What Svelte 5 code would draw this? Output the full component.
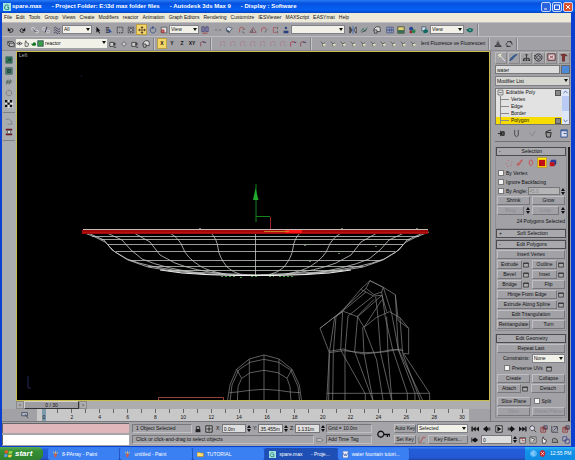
<script>
  // each icon is a list of [path, stroke, fill] on a 10x10 grid
  const icons = {
    undo: [['M3 8 Q8 8 7.5 5 Q6.5 2 3 4.5', '#111'], ['M1 2V6.5H5Z', 'none', '#111']],
    redo: [['M7 8 Q2 8 2.5 5 Q3.5 2 7 4.5', '#111'], ['M9 2V6.5H5Z', 'none', '#111']],
    link: [['M1 2H4V5H1Z M6 5.5H9V8.5H6Z', '#ddd', '#889'], ['M3 5L6 7', '#224']],
    unlink: [['M1 2H4V5H1Z M6 5.5H9V8.5H6Z', '#ddd', '#889'], ['M6 1L4 8', '#224']],
    bind: [['M1 3Q3 0 5 3T9 3 M1 6Q3 3 5 6T9 6 M1 9Q3 6 5 9T9 9', '#335']],
    cursor: [['M3 1V8L5 6.5L6.5 9.5L7.5 9L6 6H8Z', 'none', '#111']],
    list: [['M1 2H5 M1 4H5 M1 6H5 M1 8H5', '#223'], ['M5 3V9L7 7.5L9 8Z', 'none', '#2d4f9c']],
    rect: [['M1.5 1.5H8.5V8.5H1.5Z', '#222', 'none', '1.5 1']],
    windowSel: [['M1.5 1.5H8.5V8.5H1.5Z', '#222', 'none', '1.5 1'], ['M5 5m-2 0a2 2 0 1 0 4 0a2 2 0 1 0 -4 0', '#444', '#bbb']],
    move: [['M5 2V8 M2 5H8', '#543'], ['M5 0L7 2.5H3Z M5 10L3 7.5H7Z M0 5L2.5 3V7Z M10 5L7.5 7V3Z', 'none', '#543']],
    rotate: [['M4 1.8A3.5 3.5 0 1 0 7.5 2.7', '#33508c'], ['M4 0L7 2L4 4Z', 'none', '#33508c']],
    scale: [['M1.5 1.5H8.5V8.5H1.5Z', '#555', '#ddd'], ['M2 5H5V8H2Z', '#a22', '#c88']],
    pivot: [['M1 1H4V7H1Z M6 1H9V7H6Z', '#447', '#88a'], ['M2 9H8', '#a33']],
    manip: [['M1 5H4 M6 5H9', '#666']],
    cube: [['M1 4L4 1L9 3L6 7Z', '#456', '#dde'], ['M1 4L6 7V9L2 7Z', 'none', '#456']],
    snap: [['M2 8V4Q2 1.5 4.5 1.5T7 4', '#b34b56'], ['M6 4H9 M5 7L8 9', '#555']],
    angle: [['M1 8L5 2L9 8Z', '#84505a'], ['M4 8Q3 6 5 5', '#333']],
    percent: [['M2 7V4Q2 2 5 2T7 4', '#b34b56'], ['M6 8L9 4', '#555']],
    spin: [['M7 2H3V8H7', '#a85058'], ['M8 1V4 M8 6V9', '#555']],
    named: [['M5 1A1.5 1.5 0 1 1 4.9 1Z M2 9V6H8V9Z', 'none', '#27407e']],
    mirror: [['M1 1L4 5L1 9Z', '#333', '#555'], ['M9 1L6 5L9 9Z', '#333', '#bbb'], ['M5 0V10', '#36c']],
    align: [['M1 7L4 3L6 7L9 2', '#2e6857'], ['M2 8L8 5', '#444']],
    layers: [['M1 4L4 1H8L9 3V7H4Z', '#333', '#ddd'], ['M1 5H5V9H2Z', '#333', '#bbb']],
    table: [['M1 1.5H9V8.5H1Z M1 4H9 M1 6H9 M4 2V8 M6.5 2V8', '#347', '#dde']],
    schematic: [['M1 1H9V9H1Z', '#444', '#e0d570'], ['M1 5H9V9H1Z', 'none', '#3e6f55']],
    material: [['M4 1A2.5 2.5 0 1 1 3.9 1Z', 'none', '#293f94'], ['M7 4A2.5 2.5 0 1 1 6.9 4Z', 'none', '#298050'], ['M2 6H5V9H2Z', 'none', '#a32929']],
    render: [['M1 1H6V6H1Z', '#456', '#cde'], ['M3 6Q3 4 6 4T9 7Q8 9 5 9T3 6Z', 'none', '#126b62']],
    teapot: [['M2 4Q5 1 8 4L9.5 3L8 7Q5 9 2 7L0 4Z', 'none', '#126b62'], ['M4 5H6', '#dfe']],
    layer: [['M1 2H7L9 4V8H3L1 6Z', '#333', '#bbb'], ['M1 2L3 4H9 M3 4V8', '#333']],
    eye: [['M1 5Q5 1 9 5Q5 9 1 5Z', '#333', '#fff'], ['M4 4H6V6H4Z', 'none', '#223']],
    hand: [['M3 9V4L4 1L5 4L8 5L7 9Z', '#333', '#eee']],
    pot: [['M1 4L3 6Q5 2 8 4L9 7Q6 9 3 8Z', 'none', '#147326']],
    green: [['M1 1H9V9H1Z', '#245', '#3c9d48']],
    addLayer: [['M1 3H6V8H1Z', '#333', '#ccc'], ['M5 5H9 M7 3V7 M6 9H9', '#333']],
    diamond: [['M2 5L5 2L8 5L5 8Z', '#555', '#ccc']],
    faded: [['M2 8V4Q2 2 5 2T8 4', '#aa7f86'], ['M6 5L8 8', '#86868c']],
    snapAxis: [['M2 8V4Q2 2 5 2T8 4', '#824754'], ['M5 3H9', '#447']],
    magnet: [['M2 8V4Q2 2 5 2T8 4', '#ad3948'], ['M6 3H9', '#447']],
    bulb: [['M2 2L5 5L5 8 M5 5L7 3', '#555'], ['M5 5H8V7H5Z', 'none', '#ece8ba']],
    stand: [['M5 1V6 M3 4H7', '#333'], ['M1 8L3 6H7L9 8Z', '#222', '#777']],
    recycle: [['M3 2L7 2 M8 3L9 6 M7 8H3 M1 6L3 3', '#222'], ['M7 1L9 3H6Z M3 9L1 7H4Z', 'none', '#222']],
    reactor1: [['M1 1H9V9H1Z', '#466', '#2f7556'], ['M3 7L7 3M4 4H7V7', '#143f30']],
    reactor2: [['M1 1H9V9H1Z', '#355', '#5c9274'], ['M3 3H7V7H3Z', '#234', '#2a634b']],
    hash: [['M2 8L4 2 M5 8L7 2 M1 4H9 M1 6H8', '#4d5f55']],
    ring: [['M5 1.5A3.5 3.5 0 1 1 4.9 1.5Z', '#777', '#aaa']],
    checker: [['M0 0H10V10H0Z', 'none', '#ddd'], ['M0 0H3V3H0Z M6 0H9V3H6Z M3 3H6V6H3Z M0 6H3V9H0Z M6 6H9V9H6Z', 'none', '#111']],
    cloth: [['M1 3Q5 1 8 5L9 9H3', '#7c7c80']],
    film: [['M1 1H9V3H1Z M1 7H9V9H1Z', 'none', '#6c1820'], ['M3 3H7V7H3Z', '#555', '#ddd']],
    create: [['M2 1L9 9', '#eee'], ['M1 3L5 1 M2 5L4 3', '#ffc']],
    modify: [['M1 9Q1 5 5 4T9 1', '#223a67'], ['M1 9Q4 8 6 5L9 1Q4 1 1 9Z', 'none', '#345c94']],
    hierarchy: [['M5 3V6 M2 7V6H8V7', '#333'], ['M4 1H6V3H4Z M1 7H3V9H1Z M4 7H6V9H4Z M7 7H9V9H7Z', 'none', '#333']],
    motion: [['M5 1A4 4 0 1 1 4.9 1Z M5 3A2 2 0 1 1 4.9 3Z', '#333'], ['M0 3H2 M0 6H1', '#333']],
    display: [['M1 1H9V8H1Z', '#5a1a26', '#ddd'], ['M3 3L7 6 M7 3L3 6', '#9d3946']],
    hammer: [['M2 2Q6 0 9 3L6 3V9H4V3Z', '#6a2929', '#8b3535']],
    pin: [['M1 5H4 M4 2V8 M5 3H8V7H5Z', '#222', '#555']],
    tube: [['M3 1V7Q5 10 7 7V1', '#444']],
    check: [['M2 4L5 8L8 2', '#888']],
    trash: [['M2 4H8L7 9H3Z', '#222', '#999'], ['M2 3L8 1', '#222']],
    config: [['M1 1H8V9H1Z', '#234b91', '#dde'], ['M1 2H8 M4 5H7', '#234b91']],
    trackview: [['M1 2H8V6H1Z M5 4L9 9', '#345', '#bbc']],
    vertex: [['M1 6H2 M4 2H5 M8 4H9 M3 9H4 M7 8H8', '#ce4545']],
    edge: [['M1 7L5 6L8 1L5 3Z M2 9L5 6', '#ce4545']],
    border: [['M4 1Q8 1 7 6Q5 10 3 7Q2 4 4 1', '#ce4545']],
    polygon: [['M1 1H9V9H1Z', 'none', '#c00f16']],
    element: [['M1 4L3 1H9L7 4Z', 'none', '#2d3b9c'], ['M1 4H7V9H1Z', 'none', '#c00f16'], ['M7 4L9 1V6L7 9Z', 'none', '#232d6c']],
    box: [['M1 1.5H9V8.5H1Z', '#111', '#aaa'], ['M1 2.5H9', '#111']],
    lock: [['M3 5V2H7V5', '#222'], ['M2 5H8V9H2Z', 'none', '#222']],
    absolute: [['M1 1H9V9H1Z', '#111', '#bbb'], ['M5 2V8 M2 5H8', '#111']],
    tag: [['M1 3H6L9 5L6 7H1Z', '#777', '#bbb']],
    key: [['M3 2.5A2.3 2.3 0 1 1 2.9 2.5Z M5 5H10 M8 5V7 M10 5V7', '#111']],
    curve: [['M1 8Q4 8 5 4T9 2', '#b33'], ['M1 1V9H9', '#777']],
    first: [['M1 2V8 M2 2V8', '#111'], ['M6 2V8L2 5Z M10 2V8L6 5Z', 'none', '#111']],
    prev: [['M5 1V9L0 5Z M5 3H7V7H5Z M8 3H9V7H8Z', 'none', '#111']],
    play: [['M1 1H9V9H1Z', '#111', '#ccc'], ['M3 2L8 5L3 8Z', 'none', '#111']],
    next: [['M5 1V9L10 5Z M3 3H5V7H3Z M1 3H2V7H1Z', 'none', '#111']],
    last: [['M8 2V8 M9 2V8', '#111'], ['M0 2V8L4 5Z M4 2V8L8 5Z', 'none', '#111']],
    keyMode: [['M1 2V8', '#111'], ['M5 2V8L1 5Z M5 2V8L9 5Z', 'none', '#111']],
    clock: [['M1 2H8V9H1Z', '#444', '#ddd'], ['M4 4V6H7 M1 3H8', '#933']],
    zoom: [['M4 1A3 3 0 1 1 3.9 1Z', '#333', '#dde'], ['M6 6L9 9', '#333']],
    zoomAll: [['M1 3H7V9H1Z M4 1V8 M2 5H9', '#933'], ['M5 1H9V5H5Z', '#335']],
    extents: [['M1 1V9 M1 9H9 M3 2H8V7', '#334'], ['M3 7L7 3', '#447']],
    fov: [['M1 1H9V9H1Z', '#555', '#bbb'], ['M2 2L7 4L5 7', '#333', '#eee']],
    arc: [['M2 7Q1 2 5 3T8 8 M1 8H9', '#333', '#999']],
    maxmin: [['M1 1H6V6H1Z M4 4H9V9H4Z', '#343a83', '#bbb']],
    paint: [['M3 4H7L6 9H4Z', 'none', '#db5937'], ['M3 4L2 1 M5 4V0 M7 4L8 1', '#f7cf58']],
    folder: [['M0 2H4L5 3H9V8H0Z', '#b98a23', '#ffe273']],
    max: [['M0 0H10V10H0Z', 'none', '#a6e3db'], ['M7 3Q3 1 2 5T7 8V5H5', '#08736f']],
    word: [['M1 0H9V10H1Z', '#345da9', '#eef'], ['M2 3L4 7L5 4L6 7L8 3', '#345da9']],
    shield: [['M5 0Q9 1 9 5T5 10Q1 9 1 5T5 0Z', 'none', '#c52a32'], ['M3 3L7 7M7 3L3 7', '#fff']],
    arrowLeft: [['M5 0A5 5 0 1 1 4.9 0Z', 'none', '#58b5f6'], ['M6 2L3 5L6 8', '#fff']],
    chevron: [['M2 6L5 3L8 6', '#346']]
  };

  const menus = ['File', 'Edit', 'Tools', 'Group', 'Views', 'Create', 'Modifiers', 'reactor', 'Animation',
    'Graph Editors', 'Rendering', 'Customize', 'IESViewer', 'MAXScript', 'EASYmat', 'Help'];

  const mainBar = ['undo', 'redo', '|', 'link', 'unlink', 'bind', 'select:All:30', 'cursor', 'list', 'rect', 'windowSel',
    'move', 'rotate', 'scale', 'select:View:30', 'pivot', '|', 'manip', 'cube', '|', 'snap', 'angle', 'percent', 'spin',
    'named', 'select::54', '|', 'mirror', 'align', '|', 'layers', '|', 'table', 'schematic', 'material', '|', 'render',
    'select:View:34', 'teapot'];

  const stack = ['Vertex', 'Edge', 'Border', 'Polygon'];
  const frames = Array.from({ length: 31 }, (_, i) => i);
  const tasks = [
    { icon: 'paint', text: '8-PArray - Paint' },
    { icon: 'paint', text: 'untitled - Paint' },
    { icon: 'folder', text: 'TUTORIAL' },
    { icon: 'max', text: 'spare.max      - Proje...', active: true },
    { icon: 'word', text: 'water fountain tutori...' }
  ];

  const rings = [
    [92, 237], [101, 240], [108, 245], [116, 252], [130, 261], [148, 267], [168, 271]
  ];
  const ribs = [
    'M82 232L95 237L105 242L115 252L128 260L148 267L172 271L205 274L256 275',
    'M88 233L104 240L112 250L127 259Q150 268 190 272L256 275',
    'M107 233L122 240L131 250L142 259Q165 269 205 274',
    'M134 233L150 242L160 255L175 263Q195 271 225 274',
    'M170 233Q180 239 183 248T200 266Q208 271 225 274',
    'M211 233Q217 239 218 248T227 267Q232 272 242 275'
  ];
</script>

{#snippet icon(name)}
  <svg class="icon" viewBox="0 0 10 10" aria-hidden="true">
    {#each icons[name] as [d, stroke, fill, dash]}
      <path {d} {stroke} fill={fill ?? 'none'} stroke-dasharray={dash} />
    {/each}
  </svg>
{/snippet}

{#snippet tool(name, on = false)}
  <button class="tool" class:on aria-label={name}>{@render icon(name)}</button>
{/snippet}

{#snippet combo(value, label)}
  <span class="combo">
    <select aria-label={label}><option>{value}</option></select>
  </span>
{/snippet}

{#snippet header(sign, text)}
  <button class="header"><span>{sign}</span><b>{text}</b></button>
{/snippet}

{#snippet spinner()}
  <span class="spinner"><i></i><i></i></span>
{/snippet}

<div class="window">
  <header class="titlebar">
    {@render icon('max')}
    <span class="file">spare.max</span>
    <span class="project">- Project Folder: E:\3d max folder files</span>
    <span class="product">- Autodesk 3ds Max 9</span>
    <span>- Display : Software</span>
    <div class="winbuttons">
      <button aria-label="Minimize"><svg viewBox="0 0 8 8"><path d="M2 6H5" /></svg></button>
      <button aria-label="Restore"><svg viewBox="0 0 8 8"><path d="M1.5 2H6.5V6.5H1.5Z" /></svg></button>
      <button class="close" aria-label="Close"><svg viewBox="0 0 8 8"><path d="M2 2L6 6M6 2L2 6" /></svg></button>
    </div>
  </header>

  <nav class="menu">
    {#each menus as item}
      <button>{item}</button>
    {/each}
  </nav>

  <div class="toolbar">
    {#each mainBar as item}
      {#if item === '|'}
        <i class="sep"></i>
      {:else if item.startsWith('select')}
        <div class="sized" style="width: {item.split(':')[2]}px">{@render combo(item.split(':')[1], 'Options')}</div>
      {:else}
        {@render tool(item, item === 'move')}
      {/if}
    {/each}
    <i class="end"></i>
  </div>

  <div class="toolbar">
    {@render tool('layer')}
    <div class="layers">
      {@render icon('eye')}{@render icon('hand')}{@render icon('pot')}{@render icon('green')}
      {@render combo('reactor', 'Layer')}
    </div>
    {@render tool('addLayer')}{@render tool('diamond')}{@render tool('addLayer')}{@render tool('layers')}
    <i class="end"></i>
    <button class="axis on">X</button>
    <button class="axis">Y</button>
    <button class="axis">Z</button>
    <button class="axis">XY</button>
    {@render tool('snapAxis')}
    <i class="end"></i>
    <div class="strip">
      {#each Array(7) as _}{@render tool('faded')}{/each}
      {@render tool('magnet')}{@render tool('snapAxis')}
    </div>
    <i class="end"></i>
    <div class="strip">
      {#each Array(10) as _}{@render tool('bulb')}{/each}
    </div>
    <span class="lights">lent Fluoresce ve Fluorescen</span>
    <i class="end"></i>
    {@render tool('stand')}{@render tool('recycle')}
    <i class="end"></i>
  </div>

  <div class="body">
    <div class="left">
      <aside class="reactor">
        {@render tool('reactor1')}{@render tool('reactor2')}{@render tool('hash')}{@render tool('ring')}{@render tool('checker')}
        <hr />
        {@render tool('cloth')}{@render tool('film')}
        <hr />
      </aside>
      <div class="stage">
        <main class="viewport">
          <svg viewBox="17 51 472 350" preserveAspectRatio="xMidYMid slice" role="img" aria-label="Left viewport">
            <text x="19" y="57">Left</text>
            <path class="dim" d="M81 76H82M28 376V388H31" />

            {#each rings as [x, y]}
              <path class="ring" d="M{x} {y - 0.5}H{511 - x}" />
            {/each}
            <g class="rib">
              {#each ribs as d}<path {d} />{/each}
            </g>
            <g class="rib" transform="translate(511 0) scale(-1 1)">
              {#each ribs as d}<path {d} />{/each}
            </g>
            <path class="rib" d="M255.500 233V276" />
            <path class="keel" d="M160 270L182 273L205 274.500L235 275.500H276L306 274.500L329 273L351 270" />
            <path d="M82 230H428V234H82Z" fill="#a00808" />
            <path d="M83 229.500H428" stroke="#c9baba" />
            <path d="M82 232.500H428" stroke="#b51212" />
            <path d="M285 231.500H302" stroke="#ff1717" stroke-width="3" />
            <path d="M264 231.500H289" stroke="#c67b25" />
            <path d="M221 276.500H236M240 277.500H243M251 276.500H258M269 276.500H274M279 276.500H293" stroke="#3b9a3b" stroke-dasharray="2 2" />
            <path d="M199 228.500H201M341 228.500H343M416 228.500H418M304 245.500H306M338 253.500H340M375 246.500H377M309 261.500H311" stroke="#617861" />
            <path d="M256 184V222M256 216.500H270" stroke="#15851b" fill="none" />
            <path d="M270.500 217V229" stroke="#a12222" />
            <path d="M255.500 188L258.500 200H253Z" fill="#22a82a" />

            <!-- dome -->
            <g class="mesh" transform="translate(210 270) scale(.3333)">
              <path d="M52 395L60 345L80 298L118 267L162 255L207 267L246 298L268 345L275 395" />
              <path d="M60 395L66 345L86 300L120 277L162 268L206 277L242 300L264 350L269 395" />
              <path d="M82 395L84 350L95 325L121 308L162 301L204 308L231 325L240 350L243 395" />
              <path d="M58 368L82 366L120 361L162 358L204 361L240 366L270 368" />
              <path d="M118 267V395M162 255V395M207 267V395M80 298L95 325M246 298L231 325" />
            </g>

            <!-- rock -->
            <g class="mesh" transform="translate(210 270) scale(.3333)">
              <path d="M480 32L520 52L556 74L565 152L596 175V252L580 250L659 370V395M480 32L452 58L398 122L330 175L358 248L350 395" />
              <path d="M480 32L468 55L492 74L515 66L520 52L480 32M452 58L468 66L490 78L516 76L530 125" />
              <path d="M330 175L372 142L400 124L443 140L462 172L500 142L538 125L570 143L596 175" />
              <path d="M358 244L400 237L430 246L462 252L500 248L550 238L580 242M358 248L400 242L462 248L520 246L575 237" />
              <path d="M350 370H659" />
              <path d="M468 55L374 142L358 248L356 395M468 66L378 140L370 248L368 395" />
              <path d="M490 78L414 138L405 248V395M492 88L443 138L434 244L490 395M398 122L392 240L466 372V395" />
              <path d="M516 76L443 140M515 90L462 172L500 270L520 395M458 172L462 250L490 395" />
              <path d="M497 80L504 142L512 250L546 395M515 66L526 142L548 238L592 370V395" />
              <path d="M520 52L545 130L565 238L640 395M556 74L565 240L615 370V395M530 140L534 250L546 395M570 143L578 250L632 395" />
            </g>
            <path d="M158.500 401V397.500H223.500V401" stroke="#993e35" fill="none" />
          </svg>
        </main>
        <div class="slider">
          <button>&lt;</button><button class="thumb">0 / 30</button><button>&gt;</button>
        </div>
      </div>
      <div class="trackbar">
        <div class="trackicon">{@render icon('trackview')}</div>
        <div class="ticks">
          {#each frames as f}
            <div class="tick" class:now={f === 0}>{f % 2 === 0 ? f : ''}</div>
          {/each}
        </div>
      </div>
    </div>

    <aside class="command">
      <div class="tabs">
        {@render tool('create')}{@render tool('modify')}{@render tool('hierarchy')}{@render tool('motion')}{@render tool('display')}{@render tool('hammer')}
      </div>
      <div class="name"><input value="water" aria-label="Object name" /><button class="swatch" aria-label="Object color"></button></div>
      {@render combo('Modifier List', 'Modifier List')}
      <div class="stack">
        <ul>
          <li><svg class="icon" viewBox="0 0 10 10"><path d="M1.500 1.500H8.500V8.500H1.500ZM3 5H7" stroke="#555" fill="none" /></svg>Editable Poly<i></i></li>
          {#each stack as level}
            <li class="sub" class:picked={level === 'Polygon'}>{level}{#if level === 'Polygon'}<i></i>{/if}</li>
          {/each}
        </ul>
        <div class="scroll"><button aria-label="Up">{@render icon('chevron')}</button><span></span><button class="down" aria-label="Down">{@render icon('chevron')}</button></div>
      </div>
      <div class="tabs small">
        {@render tool('pin')}{@render tool('tube')}{@render tool('check')}{@render tool('trash')}{@render tool('config')}
      </div>

      <div class="rollouts">
        <section>
          {@render header('-', 'Selection')}
          <div class="levels">
            {@render tool('vertex')}{@render tool('edge')}{@render tool('border')}{@render tool('polygon', true)}{@render tool('element')}
          </div>
          <label><input type="checkbox" />By Vertex</label>
          <label><input type="checkbox" />Ignore Backfacing</label>
          <div class="angle">
            <label><input type="checkbox" />By Angle:</label>
            <input class="num" value="45.0" disabled aria-label="Angle" />{@render spinner()}
          </div>
          <div class="pair"><button>Shrink</button><button>Grow</button></div>
          <div class="pair off"><button disabled>Ring</button>{@render spinner()}<button disabled>Loop</button>{@render spinner()}</div>
          <p>24 Polygons Selected</p>
        </section>
        <section>{@render header('+', 'Soft Selection')}</section>
        <section>
          {@render header('-', 'Edit Polygons')}
          <div class="pair"><button>Insert Vertex</button></div>
          {#each [['Extrude', 'Outline'], ['Bevel', 'Inset'], ['Bridge', 'Flip']] as row}
            <div class="pair">
              {#each row as text}
                <div class="cell"><button>{text}</button>{#if text !== 'Flip'}{@render tool('box')}{/if}</div>
              {/each}
            </div>
          {/each}
          {#each ['Hinge From Edge', 'Extrude Along Spline'] as text}
            <div class="pair"><div class="cell"><button>{text}</button>{@render tool('box')}</div></div>
          {/each}
          <div class="pair"><button>Edit Triangulation</button></div>
          <div class="pair"><button>Retriangulate</button><button>Turn</button></div>
        </section>
        <section class="geometry">
          {@render header('-', 'Edit Geometry')}
          <div class="pair"><button>Repeat Last</button></div>
          <div class="constraints"><span>Constraints:</span>{@render combo('None', 'Constraints')}</div>
          <div class="preserve"><label><input type="checkbox" />Preserve UVs</label>{@render tool('box')}</div>
          <div class="pair"><button>Create</button><button>Collapse</button></div>
          <div class="pair"><div class="cell"><button>Attach</button>{@render tool('box')}</div><button>Detach</button></div>
          <div class="pair slice"><button>Slice Plane</button><label><input type="checkbox" />Split</label></div>
          <div class="pair off"><button disabled>Slice</button><button disabled>Reset Plane</button></div>
        </section>
      </div>
    </aside>
  </div>

  <footer class="status">
    <div class="listener"><div></div><div></div></div>
    <div class="info">
      <div class="line">
        <span class="sunk selected">1 Object Selected</span>
        {@render tool('lock')}{@render tool('absolute')}
        {#each [['X:', '0.0m'], ['Y:', '35.455m'], ['Z:', '1.131m']] as [axis, value]}
          <label class="coord">{axis}<input {value} /></label>{@render spinner()}
        {/each}
        <span class="sunk grid">Grid = 10.0m</span>
      </div>
      <div class="line">
        <span class="sunk prompt">Click or click-and-drag to select objects</span>
        {@render tool('tag')}
        <span class="sunk grid">Add Time Tag</span>
      </div>
    </div>
    <button class="setkeys" aria-label="Set keys">{@render icon('key')}</button>
    <div class="keys">
      <div class="line"><button class="flat">Auto Key</button>{@render combo('Selected', 'Key set')}</div>
      <div class="line"><button class="flat">Set Key</button>{@render tool('curve')}<button class="flat filters">Key Filters...</button></div>
    </div>
    <div class="playback">
      <div class="line">{@render tool('first')}{@render tool('prev')}{@render tool('play')}{@render tool('next')}{@render tool('last')}</div>
      <div class="line">{@render tool('keyMode')}<input value="0" aria-label="Frame" />{@render spinner()}{@render tool('clock')}</div>
    </div>
    <div class="navtools">
      <div class="line">{@render tool('zoom')}{@render tool('zoomAll')}{@render tool('extents')}{@render tool('zoomAll')}</div>
      <div class="line">{@render tool('fov')}{@render tool('hand')}{@render tool('arc')}{@render tool('maxmin')}</div>
    </div>
  </footer>
</div>

<div class="taskbar">
  <button class="start">
    <svg viewBox="0 0 10 10" aria-hidden="true">
      <path d="M1 2Q3 1 4.500 2L4 5Q2 4 .5 5Z" fill="#f0532d" />
      <path d="M5.500 2Q7 3 9.500 2L9 5Q7 6 5 5Z" fill="#8ed44b" />
      <path d="M.5 6Q2 5 4 6L3.500 9Q2 8 0 9Z" fill="#5b9cf5" />
      <path d="M5 6Q7 7 9 6L8 9Q6 10 4.500 9Z" fill="#fbd13c" />
    </svg>start
  </button>
  <div class="tasks">
    {#each tasks as task}
      <button class:active={task.active}>{@render icon(task.icon)}<span>{task.text}</span></button>
    {/each}
  </div>
  <div class="tray">{@render icon('arrowLeft')}{@render icon('shield')}<span>12:55 PM</span></div>
</div>

<style>
  :global(body) {
    margin: 0;
  }

  :global(#app) {
    height: 100vh;
    display: flex;
    flex-direction: column;
    overflow: hidden;
    background: #a1a1a6;
    font: 5px/7px "Liberation Sans", Arial, sans-serif;
    color: #111;
  }

  button, input, select {
    box-sizing: border-box;
    min-width: 0;
    margin: 0;
    padding: 0;
    border: 0;
    border-radius: 0;
    font: inherit;
    color: inherit;
    background: none;
  }

  .icon {
    width: 8px;
    height: 8px;
    flex: none;
    display: block;
  }

  .window {
    flex: 1;
    min-height: 0;
    display: flex;
    flex-direction: column;
    border: solid #0b3fd0;
    border-width: 0 4px 1px 2px;
  }

  .titlebar {
    height: 13px;
    flex: none;
    display: flex;
    align-items: center;
    margin: 0 -4px 0 -2px;
    padding: 0 2px 0 3px;
    background: linear-gradient(#2a7cf5, #0652df 25%, #0560f4 75%, #0446c4);
    color: #fff;
    font-size: 6px;
    font-weight: bold;
    white-space: pre;
  }

  .file {
    margin: 0 10px 0 1px;
  }

  .project, .product {
    margin-right: 10px;
  }

  .winbuttons {
    display: flex;
    gap: 1px;
    margin-left: auto;
  }

  .winbuttons button {
    width: 10px;
    height: 10px;
    border: 1px solid #c6d8fa;
    border-radius: 2px;
    background: #2a63dc;
  }

  .winbuttons .close {
    background: #dc4e2c;
  }

  .winbuttons svg {
    display: block;
    fill: none;
    stroke: #fff;
  }

  .menu {
    height: 9px;
    flex: none;
    display: flex;
    gap: 4px;
    padding-left: 2px;
    background: #ece9d8;
  }

  .menu button {
    white-space: nowrap;
  }

  .toolbar {
    height: 14px;
    flex: none;
    box-sizing: border-box;
    display: flex;
    align-items: center;
    padding-left: 3px;
    border-top: 1px solid #bdbdc2;
  }

  .tool {
    width: 10px;
    height: 11px;
    flex: none;
    display: flex;
    align-items: center;
    justify-content: center;
  }

  .toolbar .tool {
    width: 11px;
  }

  .toolbar .strip .tool {
    width: 10px;
  }

  .on {
    background: #f3d568;
    box-shadow: inset 0 0 0 1px #b99e45;
  }

  .sep {
    width: 2px;
    flex: none;
  }

  .end {
    width: 1px;
    height: 12px;
    flex: none;
    margin: 0 2px;
    background: #808087;
    border-right: 1px solid #c5c5ca;
  }

  .sized {
    display: flex;
    flex: none;
  }

  .combo {
    flex: 1;
    min-width: 0;
    position: relative;
    display: flex;
    height: 9px;
    background: #f2f1e8;
    border: 1px solid #80808a;
    box-sizing: border-box;
  }

  .combo::after {
    content: "";
    position: absolute;
    right: 1px;
    top: 2px;
    border: 2px solid transparent;
    border-top: 3px solid #111;
    pointer-events: none;
  }

  .combo select {
    appearance: none;
    width: 100%;
    line-height: 7px;
    padding-left: 1px;
  }

  .layers {
    width: 91px;
    height: 9px;
    display: flex;
    align-items: center;
    background: #f2f1e8;
  }

  .layers .icon {
    width: 7px;
    height: 7px;
  }

  .layers .combo {
    border: 0;
  }

  .axis {
    width: 10px;
    height: 11px;
    font-weight: bold;
  }

  .strip {
    display: flex;
    margin-left: 4px;
  }

  .lights {
    margin: 0 1px 0 3px;
    white-space: nowrap;
  }

  .body {
    flex: 1;
    min-height: 0;
    display: flex;
    border-top: 1px solid #8a8a90;
  }

  .left {
    flex: 1;
    min-width: 0;
    display: grid;
    grid-template: minmax(0, 1fr) auto / 14px minmax(0, 1fr);
  }

  .reactor {
    display: flex;
    flex-direction: column;
    align-items: center;
    padding-top: 3px;
    background: #a9adb0;
  }

  .reactor hr {
    width: 12px;
    margin: 3px 0 2px;
    border: 0;
    border-top: 1px solid #808087;
  }

  .stage {
    min-height: 0;
    display: flex;
    flex-direction: column;
    background: #a8a8a8;
  }

  .viewport {
    flex: 1;
    min-height: 0;
    border: 1px solid #c9bc4c;
    background: #000;
  }

  .viewport svg {
    display: block;
    width: 100%;
    height: 100%;
  }

  .viewport text {
    fill: #aaa;
  }

  .viewport .dim {
    stroke: #26265c;
    fill: none;
  }

  .ring {
    stroke: #98a098;
  }

  .rib {
    fill: none;
    stroke: #c8c8c8;
    stroke-width: 0.8;
  }

  .keel {
    fill: none;
    stroke: #eee;
  }

  .mesh path {
    fill: none;
    stroke: #858585;
    stroke-width: 0.7;
    vector-effect: non-scaling-stroke;
  }

  .slider {
    height: 8px;
    flex: none;
    display: flex;
    background: #adadad;
  }

  .slider button {
    width: 8px;
    color: #444;
    border: 1px solid #8b8b8b;
    line-height: 6px;
  }

  .slider .thumb {
    width: 55px;
    color: #111;
    background: #9d9da1;
    border-color: #d0d0d0 #333 #333 #d0d0d0;
  }

  .trackbar {
    grid-column: 1 / -1;
    height: 12px;
    display: flex;
    padding-right: 21px;
  }

  .trackicon {
    width: 35px;
    flex: none;
    display: flex;
    align-items: center;
    justify-content: flex-end;
    box-sizing: border-box;
    padding-right: 8px;
  }

  .ticks {
    flex: 1;
    display: flex;
    background: #c8c8c8;
  }

  .tick {
    flex: 1;
    min-width: 0;
    display: flex;
    justify-content: center;
    padding-top: 5px;
    background: linear-gradient(#666, #666) top center / 1px 4px no-repeat;
  }

  .tick.now {
    background: linear-gradient(#7b9bad, #7b9bad) center / 4px 12px no-repeat;
  }

  .command {
    width: 75px;
    flex: none;
    display: flex;
    flex-direction: column;
    padding: 0 1px 0 4px;
    overflow: hidden;
    border-left: 1px solid #777;
  }

  .tabs {
    height: 13px;
    flex: none;
    display: flex;
    justify-content: space-between;
    align-items: center;
    margin-bottom: 1px;
  }

  .tabs .tool {
    width: 12px;
    height: 12px;
    border: 1px solid;
    border-color: #bbb #888 #888 #bbb;
  }

  .tabs .icon {
    width: 9px;
    height: 9px;
  }

  .name {
    display: flex;
    gap: 1px;
    margin-bottom: 2px;
  }

  .name input {
    flex: 1;
    height: 9px;
    padding-left: 1px;
    background: #dcdcdc;
    border: 1px solid #777;
  }

  .swatch {
    width: 9px;
    height: 9px;
    background: #4a8ad8;
    border: 1px solid #666;
  }

  .command > .combo {
    flex: none;
    height: 10px;
    margin-bottom: 2px;
    background: #d5d5d0;
  }

  .stack {
    flex: none;
    display: flex;
    background: #e2e2e2;
    border: 1px solid #777;
  }

  .stack ul {
    flex: 1;
    margin: 0;
    padding: 0;
    list-style: none;
  }

  .stack li {
    display: flex;
    align-items: center;
    height: 7px;
    padding: 0 1px;
  }

  .stack li .icon {
    width: 7px;
    height: 7px;
    margin-right: 2px;
  }

  .stack .sub::before {
    content: "";
    width: 9px;
    height: 100%;
    margin: 0 2px 0 3px;
    background: linear-gradient(#888, #888) left / 1px 100% no-repeat, linear-gradient(#888, #888) center / 100% 1px no-repeat;
  }

  .stack .picked {
    background: #f6dc00;
  }

  .stack i {
    width: 4px;
    height: 4px;
    margin-left: auto;
    background: #888;
    border: 1px solid #555;
  }

  .scroll {
    width: 7px;
    display: flex;
    flex-direction: column;
    background: #dde6fb;
  }

  .scroll span {
    flex: 1;
    background: #b9cbf4;
    margin-bottom: 6px;
  }

  .scroll .icon {
    width: 7px;
    height: 7px;
  }

  .down {
    transform: rotate(180deg);
  }

  .tabs.small {
    height: 16px;
    border-bottom: 1px solid #6f6f74;
    margin-bottom: 5px;
  }

  .tabs.small .tool {
    border: 0;
  }

  .rollouts {
    flex: 1;
    min-height: 0;
    overflow: hidden;
    padding-right: 1px;
    border-right: 2px solid #1d1d20;
  }

  section {
    display: flex;
    flex-direction: column;
    gap: 1px;
    padding: 0 1px 1px;
    border: 1px solid #8e8e93;
    border-top: 0;
  }

  .geometry {
    margin-top: 3px;
  }

  .header {
    display: flex;
    height: 9px;
    margin: 0 -1px;
    padding: 0 2px;
    border: 1px solid #4c4c50;
    background: #a9a9ad;
    line-height: 7px;
  }

  .header b {
    flex: 1;
    font-weight: normal;
  }

  .levels {
    display: flex;
    justify-content: center;
    gap: 1px;
  }

  .levels .tool.on {
    background: #fff000;
  }

  label {
    display: flex;
    align-items: center;
    gap: 2px;
    white-space: nowrap;
  }

  section label {
    height: 8px;
    padding-left: 1px;
  }

  input[type="checkbox"] {
    appearance: none;
    width: 6px;
    height: 6px;
    flex: none;
    background: #f4f4f4;
    border: 1px solid #777;
  }

  .angle {
    display: flex;
    align-items: center;
    gap: 1px;
  }

  .num {
    flex: 1;
    height: 8px;
    color: #888;
    border: 1px solid #777;
    background: #b5b5b8;
  }

  .spinner {
    width: 4px;
    flex: none;
    display: flex;
    flex-direction: column;
    align-items: center;
    justify-content: center;
    gap: 1px;
  }

  .spinner i {
    border: 2px solid transparent;
    border-top: 0;
    border-bottom: 3px solid #111;
  }

  .spinner i + i {
    border-bottom: 0;
    border-top: 3px solid #111;
  }

  .pair {
    display: flex;
    gap: 2px;
  }

  .pair > *, .cell > button:first-child {
    flex: 1;
  }

  .pair > .spinner {
    flex: none;
  }

  .pair button:not(.tool) {
    height: 9px;
    line-height: 7px;
    white-space: nowrap;
    border: 1px solid;
    border-color: #c0c0c4 #77777b #77777b #c0c0c4;
  }

  .cell {
    min-width: 0;
    display: flex;
  }

  .cell .tool, .preserve .tool {
    width: 8px;
    height: 9px;
  }

  .cell .icon, .preserve .icon {
    width: 6px;
    height: 6px;
  }

  .off {
    color: #8b8b90;
  }

  p {
    margin: 2px 0;
    text-align: right;
  }

  .constraints, .preserve {
    display: flex;
    gap: 2px;
    padding-left: 6px;
    line-height: 9px;
  }

  .slice {
    margin-top: 3px;
  }

  .status {
    height: 23px;
    flex: none;
    display: flex;
    padding-top: 1px;
    background: #a5a5a9;
    border-top: 1px solid #77777c;
  }

  .listener {
    width: 127px;
    display: flex;
    flex-direction: column;
    gap: 2px;
    margin-right: 3px;
  }

  .listener div {
    height: 10px;
    background: #fff;
    border-left: 1px solid #666;
  }

  .listener div:first-child {
    height: 9px;
    background: #e0b8bc;
    border-top: 1px solid #666;
  }

  .line {
    display: flex;
    align-items: center;
    height: 11px;
    gap: 1px;
  }

  .info {
    flex: 1;
    min-width: 0;
  }

  .sunk {
    box-sizing: border-box;
    height: 9px;
    padding: 0 3px;
    white-space: nowrap;
    border: 1px solid;
    border-color: #77777b #c0c0c4 #c0c0c4 #77777b;
  }

  .selected {
    width: 60px;
  }

  .prompt {
    flex: 1;
  }

  .grid {
    width: 46px;
  }

  .line > .grid {
    margin-left: auto;
    padding: 0 1px;
  }

  .prompt ~ .grid {
    margin-left: 0;
  }

  .coord {
    gap: 1px;
    flex: 1;
    margin-left: 1px;
  }

  .coord input, .playback input {
    width: 10px;
    flex: 1;
    height: 9px;
    padding-left: 1px;
    background: #dedede;
    border: 1px solid #77777b;
  }

  .setkeys {
    width: 18px;
    margin: 0 2px;
    display: flex;
    align-items: center;
    justify-content: center;
  }

  .setkeys .icon {
    width: 13px;
    height: 13px;
  }

  .keys {
    width: 74px;
  }

  .flat {
    width: 22px;
    height: 9px;
    line-height: 7px;
    white-space: nowrap;
    border: 1px solid;
    border-color: #c0c0c4 #77777b #77777b #c0c0c4;
  }

  .filters {
    flex: 1;
  }

  .playback {
    width: 58px;
    padding-left: 2px;
  }

  .playback .line {
    justify-content: space-between;
  }

  .navtools {
    width: 43px;
  }

  .taskbar {
    height: 13px;
    flex: none;
    display: flex;
    background: linear-gradient(#3d83f2, #245edb 20%, #2458d2 85%, #1b45a5);
    color: #fff;
  }

  .start {
    width: 43px;
    display: flex;
    align-items: center;
    gap: 2px;
    padding-left: 4px;
    border-radius: 0 5px 5px 0;
    background: linear-gradient(#5cab5c, #348f34 30%, #2f8130);
    font-size: 8px;
    font-weight: bold;
    font-style: italic;
  }

  .start svg {
    width: 9px;
    height: 9px;
  }

  .tasks {
    flex: 1;
    min-width: 0;
    display: flex;
    padding: 1px 115px 0 5px;
  }

  .tasks button {
    flex: 1;
    display: flex;
    align-items: center;
    gap: 3px;
    padding-left: 4px;
    border-right: 1px solid #2154c4;
    border-radius: 2px;
    background: #3b80f3;
    white-space: pre;
  }

  .tasks .active {
    background: #1d4fb4;
  }

  .tasks .icon, .tray .icon {
    width: 7px;
    height: 7px;
  }

  .tray {
    box-sizing: border-box;
    width: 50px;
    display: flex;
    align-items: center;
    gap: 2px;
    padding-left: 5px;
    background: linear-gradient(#2fb7f5, #1291e8 30%, #108de2);
    white-space: nowrap;
  }

  .tray span {
    margin-left: 2px;
  }
</style>
